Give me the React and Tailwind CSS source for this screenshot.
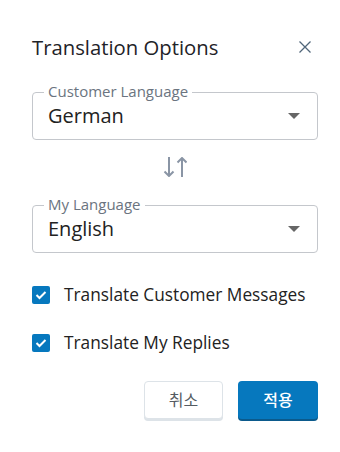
// Translation options dialog
import React from 'react';

const font = { fontFamily: '"Open Sans", "Noto Sans CJK KR", sans-serif' };

const SelectField = ({ label, value }) => (
  <div className="relative h-[48px] border border-[#c4c7cc] rounded-[4px] flex items-center justify-between pl-[15px] pr-[17px]">
    <span className="absolute -top-[12px] left-[11px] bg-white px-[4px] text-[15px] leading-[20px] text-[#6b7480]">
      {label}
    </span>
    <span className="text-[20px] leading-[26px] text-[#222]">{value}</span>
    <svg width="12" height="6" viewBox="0 0 12 6">
      <path d="M0 0 L12 0 L6 6 Z" fill="#666" />
    </svg>
  </div>
);

const CheckRow = ({ label }) => (
  <div className="flex items-center h-6 gap-[14px]">
    <div className="w-[18px] h-[18px] rounded-[2px] bg-[#0678be] flex items-center justify-center">
      <svg width="12" height="10" viewBox="0 0 12 10">
        <path d="M1.5 5 L4.5 8 L10.5 2" stroke="white" strokeWidth="2" fill="none" />
      </svg>
    </div>
    <span className="text-[17.3px] leading-[24px] text-[#222]">{label}</span>
  </div>
);

const App = () => {
  return (
    <div className="w-[340px] h-[452px] bg-white pl-8 pr-[22px] pt-[35px]" style={font}>
      {/* Header */}
      <div className="flex items-center justify-between h-6">
        <h1 className="text-[20.3px] leading-[24px] font-medium text-[#1f2328]">Translation Options</h1>
        <svg width="12" height="12" viewBox="0 0 12 12" className="mr-[7px]">
          <path d="M0.5 0.5 L11.5 11.5 M11.5 0.5 L0.5 11.5" stroke="#50667a" strokeWidth="1.3" />
        </svg>
      </div>

      <div className="mt-[33px]">
        <SelectField label="Customer Language" value="German" />
      </div>

      {/* Swap */}
      <div className="mt-[17px] h-5 flex justify-center">
        <svg width="24" height="20" viewBox="0 0 24 20">
          <g stroke="#8a95a5" strokeWidth="2" fill="none">
            <path d="M6 0 L6 19" />
            <path d="M1.5 14.5 L6 19 L10.5 14.5" />
            <path d="M19 1 L19 20" />
            <path d="M14.5 5.5 L19 1 L23.5 5.5" />
          </g>
        </svg>
      </div>

      <div className="mt-[28px]">
        <SelectField label="My Language" value="English" />
      </div>

      <div className="mt-[30px]">
        <CheckRow label="Translate Customer Messages" />
      </div>
      <div className="mt-[24px]">
        <CheckRow label="Translate My Replies" />
      </div>

      {/* Actions */}
      <div className="mt-[26px] flex justify-end gap-[15px]">
        <button className="w-[79px] h-[38px] rounded-[4px] bg-white border border-[#dde3e8] shadow-[0_2px_0_#dde3e8] text-[16px] text-[#555b62]">
          취소
        </button>
        <button className="w-[80px] h-[38px] rounded-[4px] bg-[#0678be] shadow-[0_2px_0_#0b5a8c] text-[16px] font-medium text-white">
          적용
        </button>
      </div>
    </div>
  );
};

export default App;
